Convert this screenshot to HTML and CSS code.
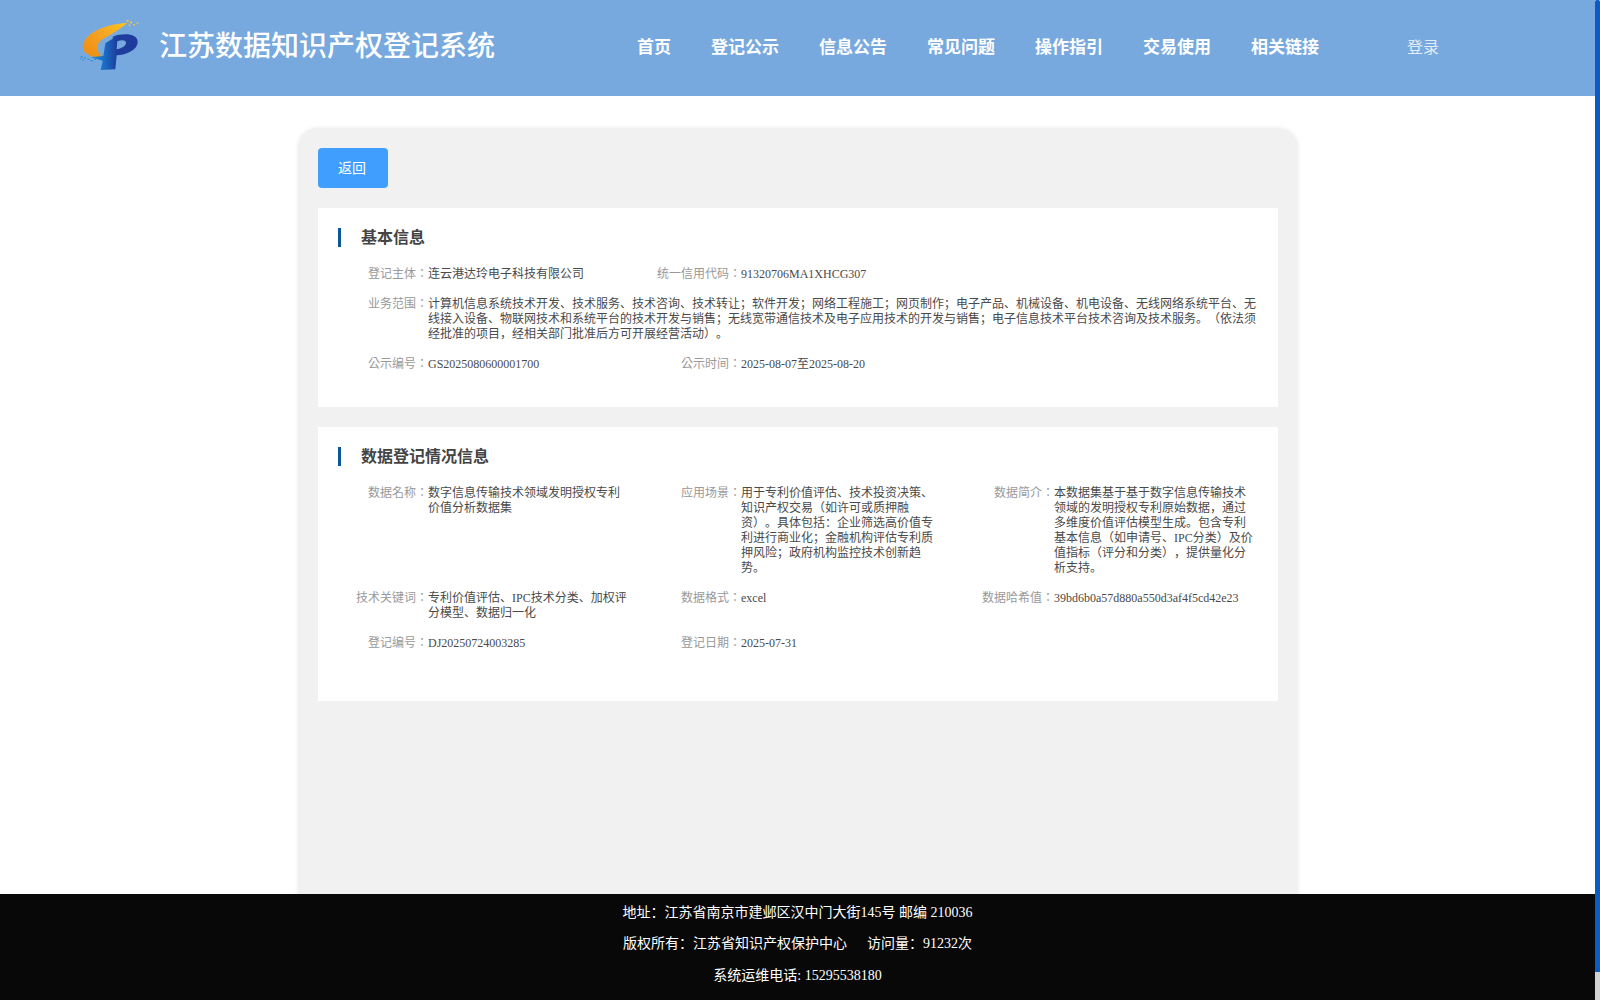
FILE: index.html
```html
<!DOCTYPE html>
<html>
<head>
<meta charset="utf-8">
<title>江苏数据知识产权登记系统</title>
<link rel="stylesheet" href="styles.css">
</head>
<body>
<header class="site-header">
  <svg class="logo" viewBox="0 0 240 210" aria-hidden="true">
    <defs>
      <linearGradient id="sw" x1="0" y1="1" x2="1" y2="0">
        <stop offset="0" stop-color="#ee8a10"/>
        <stop offset="0.55" stop-color="#f4a322"/>
        <stop offset="1" stop-color="#fbc61f"/>
      </linearGradient>
      <linearGradient id="pb" x1="0" y1="0" x2="1" y2="0">
        <stop offset="0" stop-color="#1c8fe0"/>
        <stop offset="0.3" stop-color="#1a6cc4"/>
        <stop offset="0.55" stop-color="#1d3f9e"/>
        <stop offset="1" stop-color="#1f3a9a"/>
      </linearGradient>
    </defs>
    <path fill="url(#sw)" d="M172 38C120 42 62 58 42 95C30 122 48 138 98 146C84 126 74 108 92 92C110 78 142 66 172 38Z"/>
    <path fill="url(#pb)" fill-rule="evenodd" d="M128 80C160 68 205 70 203 98C201 120 170 134 140 136L136 178L92 180L98 152L62 142L100 138L106 100L128 86ZM142 94C155 88 170 90 168 100C166 110 152 116 140 118Z"/>
    <g fill="#f7c935">
      <rect x="170" y="30" width="6" height="5"/><rect x="180" y="35" width="6" height="5"/><rect x="190" y="42" width="5" height="4"/><rect x="200" y="37" width="5" height="4"/><rect x="176" y="44" width="5" height="4"/>
    </g>
    <g fill="#2f8fd8">
      <rect x="32" y="138" width="6" height="4"/><rect x="42" y="142" width="6" height="4"/><rect x="52" y="146" width="6" height="4"/><rect x="36" y="148" width="5" height="4"/><rect x="62" y="150" width="6" height="4"/><rect x="72" y="146" width="6" height="4"/><rect x="30" y="144" width="4" height="3"/>
    </g>
  </svg>
  <h1 class="brand">江苏数据知识产权登记系统</h1>
  <nav class="nav">
    <a class="nav-item">首页</a>
    <a class="nav-item">登记公示</a>
    <a class="nav-item">信息公告</a>
    <a class="nav-item">常见问题</a>
    <a class="nav-item">操作指引</a>
    <a class="nav-item">交易使用</a>
    <a class="nav-item">相关链接</a>
  </nav>
  <a class="login">登录</a>
</header>

<main class="card">
  <button class="back-btn" type="button">返回</button>

  <section class="panel panel-basic">
    <h2 class="panel-title">基本信息</h2>
    <div class="row">
      <div class="cell"><span class="label">登记主体：</span><span class="value">连云港达玲电子科技有限公司</span></div>
      <div class="cell"><span class="label">统一信用代码：</span><span class="value">91320706MA1XHCG307</span></div>
    </div>
    <div class="row">
      <div class="cell cell-full"><span class="label">业务范围：</span><span class="value">计算机信息系统技术开发、技术服务、技术咨询、技术转让；软件开发；网络工程施工；网页制作；电子产品、机械设备、机电设备、无线网络系统平台、无线接入设备、物联网技术和系统平台的技术开发与销售；无线宽带通信技术及电子应用技术的开发与销售；电子信息技术平台技术咨询及技术服务。（依法须经批准的项目，经相关部门批准后方可开展经营活动）。</span></div>
    </div>
    <div class="row">
      <div class="cell"><span class="label">公示编号：</span><span class="value">GS2025080600001700</span></div>
      <div class="cell"><span class="label">公示时间：</span><span class="value">2025-08-07至2025-08-20</span></div>
    </div>
  </section>

  <section class="panel panel-data">
    <h2 class="panel-title">数据登记情况信息</h2>
    <div class="row">
      <div class="cell"><span class="label">数据名称：</span><span class="value">数字信息传输技术领域发明授权专利价值分析数据集</span></div>
      <div class="cell"><span class="label">应用场景：</span><span class="value">用于专利价值评估、技术投资决策、知识产权交易（如许可或质押融资）。具体包括：企业筛选高价值专利进行商业化；金融机构评估专利质押风险；政府机构监控技术创新趋势。</span></div>
      <div class="cell"><span class="label">数据简介：</span><span class="value">本数据集基于基于数字信息传输技术领域的发明授权专利原始数据，通过多维度价值评估模型生成。包含专利基本信息（如申请号、IPC分类）及价值指标（评分和分类），提供量化分析支持。</span></div>
    </div>
    <div class="row">
      <div class="cell"><span class="label">技术关键词：</span><span class="value">专利价值评估、IPC技术分类、加权评分模型、数据归一化</span></div>
      <div class="cell"><span class="label">数据格式：</span><span class="value">excel</span></div>
      <div class="cell"><span class="label">数据哈希值：</span><span class="value">39bd6b0a57d880a550d3af4f5cd42e23</span></div>
    </div>
    <div class="row">
      <div class="cell"><span class="label">登记编号：</span><span class="value">DJ20250724003285</span></div>
      <div class="cell"><span class="label">登记日期：</span><span class="value">2025-07-31</span></div>
    </div>
  </section>
</main>

<footer class="site-footer">
  <p class="foot-line">地址：江苏省南京市建邺区汉中门大街145号 邮编 210036</p>
  <p class="foot-line">版权所有：江苏省知识产权保护中心<span class="foot-gap">访问量：91232次</span></p>
  <p class="foot-line">系统运维电话: 15295538180</p>
</footer>

<div class="scroll-track" aria-hidden="true"><div class="scroll-thumb"></div></div>
</body>
</html>
```

FILE: styles.css
```css
body {
  margin: 0;
  padding-right: 5px;
  background: #fff;
  font-family: "Liberation Serif", "Noto Sans CJK SC", serif;
  color: #444;
  text-spacing-trim: space-all;
}
.site-header {
  display: flex;
  align-items: center;
  height: 96px;
  padding-left: 70px;
  background: #78a9de;
  color: #fff;
}
.logo {
  width: 80px;
  height: 70px;
  align-self: flex-start;
  margin-top: 10px;
  flex: none;
}
.brand {
  margin: 0 0 2px 9px;
  font-size: 28px;
  font-weight: 500;
  line-height: 40px;
  white-space: nowrap;
}
.nav {
  display: flex;
  gap: 40px;
  margin-left: 142px;
}
.nav-item {
  font-size: 17px;
  font-weight: 700;
  line-height: 24px;
}
.login {
  margin-left: 88px;
  font-size: 16px;
  line-height: 24px;
  color: rgba(255, 255, 255, 0.8);
}
.card {
  box-sizing: border-box;
  width: 1000px;
  height: 900px;
  margin: 32px 0 1px 298px;
  padding: 20px;
  background: #f1f1f1;
  border-radius: 20px;
  box-shadow: 0 0 5px rgba(0, 0, 0, 0.08);
}
.back-btn {
  display: block;
  width: 70px;
  height: 40px;
  margin: 0 0 20px;
  padding: 0 2px 2px 0;
  border: 0;
  border-radius: 4px;
  background: #409eff;
  color: #fff;
  font-family: inherit;
  font-size: 14px;
}
.panel {
  padding: 20px 20px 20px 10px;
  background: #fff;
}
.panel-data {
  margin-top: 20px;
  padding-bottom: 35px;
}
.panel-title {
  margin: 0 0 20px 10px;
  padding-left: 20px;
  border-left: 3px solid #0b5698;
  font-size: 16px;
  font-weight: 700;
  line-height: 19px;
  color: #444;
}
.row {
  display: flex;
  margin-bottom: 15px;
  font-size: 12px;
  line-height: 15px;
}
.cell {
  display: flex;
  width: 313px;
  flex: none;
}
.cell-full {
  width: 930px;
}
.label {
  width: 100px;
  flex: none;
  text-align: right;
  font-family: "Liberation Serif", "Noto Sans CJK TC", serif;
  color: #999;
  white-space: nowrap;
}
.value {
  width: 200px;
  flex: none;
  color: #4a4a4a;
}
.cell-full .value {
  width: 830px;
}
.site-footer {
  position: fixed;
  left: 0;
  right: 5px;
  bottom: 0;
  box-sizing: border-box;
  height: 106px;
  padding-top: 2px;
  background: #080808;
  color: #fff;
  text-align: center;
  font-size: 14px;
  line-height: 32px;
}
.foot-line {
  margin: 0;
}
.foot-line:first-child {
  padding-top: 1px;
  margin-bottom: -1px;
}
.foot-gap {
  margin-left: 20px;
}
.scroll-track {
  position: fixed;
  top: 0;
  right: 0;
  bottom: 0;
  width: 5px;
  background: #d2d2d2;
}
.scroll-thumb {
  height: 972px;
  border-radius: 2px 2px 0 0;
  background: #0a5bc4;
}
```
